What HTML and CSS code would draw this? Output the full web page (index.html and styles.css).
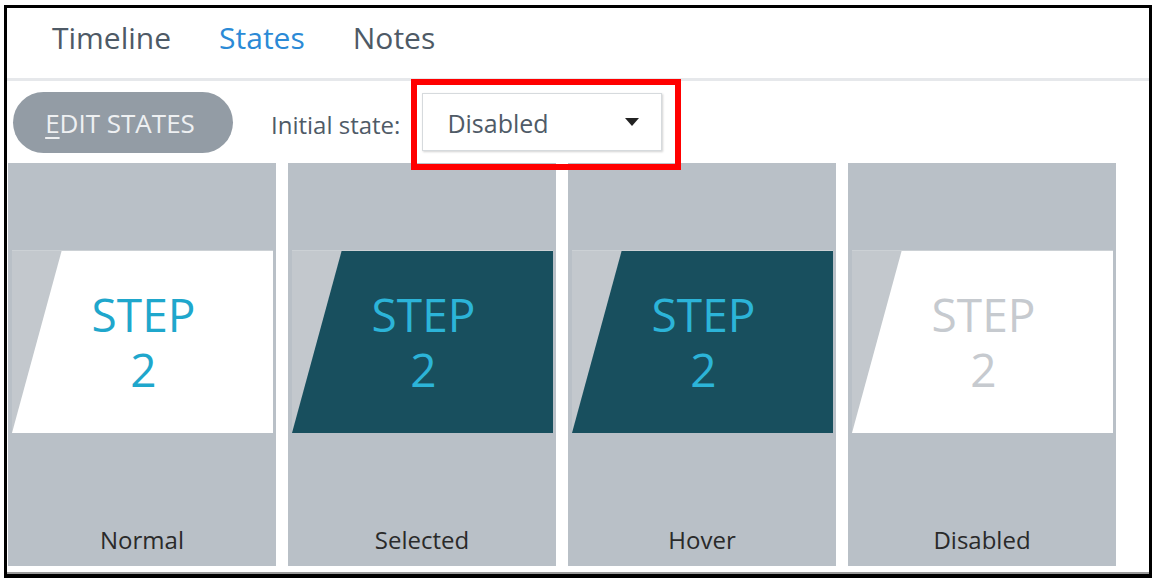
FILE: index.html
```html
<!DOCTYPE html>
<html>
<head>
<meta charset="utf-8">
<link rel="stylesheet" href="styles.css">
</head>
<body>
<div class="frame">
  <nav class="tabs">
    <span class="tab">Timeline</span>
    <span class="tab active">States</span>
    <span class="tab">Notes</span>
  </nav>
  <div class="toolbar">
    <button class="edit-btn"><span class="ul">E</span>DIT STATES</button>
    <span class="init-label">Initial state:</span>
    <div class="select">
      <span>Disabled</span>
      <svg class="caret" width="14" height="8" viewBox="0 0 14 8"><path d="M0 0H14L7 8Z" fill="#222"/></svg>
    </div>
  </div>
  <div class="cards">
    <div class="card">
      <div class="band"><div class="shape light"><p class="step">STEP<br>2</p></div></div>
      <div class="label">Normal</div>
    </div>
    <div class="card">
      <div class="band"><div class="shape dark"><p class="step">STEP<br>2</p></div></div>
      <div class="label">Selected</div>
    </div>
    <div class="card">
      <div class="band"><div class="shape dark"><p class="step">STEP<br>2</p></div></div>
      <div class="label">Hover</div>
    </div>
    <div class="card">
      <div class="band"><div class="shape light disabled"><p class="step">STEP<br>2</p></div></div>
      <div class="label">Disabled</div>
    </div>
  </div>
  <div class="highlight"></div>
</div>
</body>
</html>
```

FILE: styles.css
```css
* { box-sizing: border-box; }
html, body { margin: 0; padding: 0; background: #fff; }
body { font-family: "Open Sans", "Noto Sans", sans-serif; }

.frame {
  position: relative;
  margin: 5px 0 0 4px;
  width: 1148px;
  height: 573px;
  border: 3px solid #000;
  border-bottom-width: 4px;
  box-shadow: inset 0 -2px 0 #9a9a9a;
  display: flex;
  flex-direction: column;
}

.tabs {
  height: 73px;
  flex: none;
  display: flex;
  align-items: flex-start;
  padding: 15px 0 0 45px;
  gap: 48px;
  border-bottom: 3px solid #e6e8eb;
}
.tab {
  font-size: 30px;
  color: #4e5a66;
  line-height: 30px;
}
.tab.active { color: #2b8ad6; }

.toolbar {
  height: 82px;
  flex: none;
  display: flex;
  align-items: center;
  padding-left: 6px;
}
.edit-btn {
  width: 220px;
  height: 61px;
  border: none;
  border-radius: 31px;
  background: #939ca5;
  color: #eef0f2;
  font-family: "Open Sans", "Noto Sans", sans-serif;
  font-size: 26px;
  padding: 0 6px 0 0;
  margin-top: 1px;
  line-height: 1;
}
.ul { text-decoration: underline; text-underline-offset: 4px; text-decoration-thickness: 2px; }
.init-label {
  margin-left: 38px;
  font-size: 24px;
  color: #4f5b67;
  padding-top: 4px;
}
.select {
  margin-left: 22px;
  width: 240px;
  height: 58px;
  border: 1px solid #d6dadd;
  box-shadow: 1px 1px 2px rgba(0,0,0,0.18);
  background: #fff;
  display: flex;
  align-items: center;
  justify-content: space-between;
  padding: 2px 22px 0 24px;
  font-size: 25px;
  color: #4f5b67;
}
.caret { display: block; margin-top: -2px; }

.cards {
  display: flex;
  gap: 12px;
  padding-left: 1px;
}
.card {
  width: 268px;
  height: 403px;
  background: #b9c0c7;
  display: flex;
  flex-direction: column;
}
.band {
  margin: 87px 3px 0 4px;
  height: 183px;
  background: #c3c8cd;
  border-top: 1px solid #ccd1d5;
}
.shape {
  height: 100%;
  clip-path: polygon(19% 0, 100% 0, 100% 100%, 0 100%);
  display: flex;
  align-items: center;
  justify-content: center;
  padding-left: 2px;
}
.step {
  margin: 0;
  text-align: center;
  font-size: 46px;
  line-height: 55px;
}
.shape.light { background: #fff; color: #1fa7cc; }
.shape.dark { background: #184f5e; color: #2cb4d8; }
.shape.light.disabled { color: #c6cacf; }

.label {
  margin-top: auto;
  padding-bottom: 11px;
  text-align: center;
  font-size: 24px;
  line-height: 30px;
  color: #2a2a2a;
}

.highlight {
  position: absolute;
  left: 404px;
  top: 71px;
  width: 270px;
  height: 91px;
  border: 6px solid #ff0000;
}
```
